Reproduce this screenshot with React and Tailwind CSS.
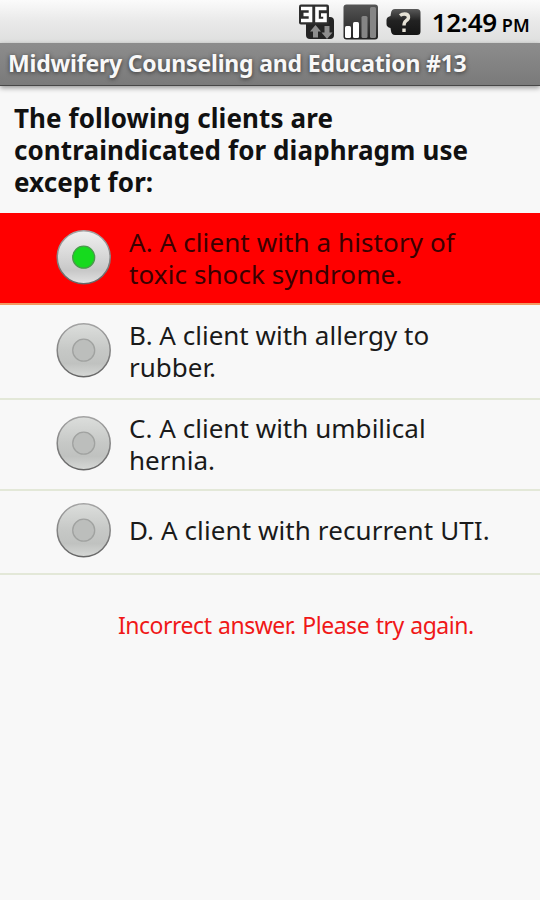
const answers = [
  { text: "A. A client with a history of toxic shock syndrome.", row: "h-[92px] bg-[#ff0000] text-[#3a0000] border-[#f39a62] pb-px", label: "tracking-[0.1px]", radio: "mb-[2px]", selected: true },
  { text: "B. A client with allergy to rubber.", row: "h-[95px] text-[#1a1a1a] border-[#e3e8d8] pb-[2px]", label: "", radio: "mb-[2px]" },
  { text: "C. A client with umbilical hernia.", row: "h-[91px] text-[#1a1a1a] border-[#e3e8d8] pb-[2px]", label: "tracking-[0.03px]", radio: "mb-[2px]" },
  { text: "D. A client with recurrent UTI.", row: "h-[84px] text-[#1a1a1a] border-[#e3e8d8] pb-[4px]", label: "tracking-[0.1px]", radio: "" },
]

const Radio = ({ selected, className }) => {
  return (
    <svg className={`h-[58px] w-[58px] shrink-0 ${className}`} viewBox="0 0 58 58">
      <defs>
        <linearGradient id="radioOn" x1="0" y1="0" x2="0" y2="1">
          <stop offset="0" stopColor="#f0f0f0" />
          <stop offset="0.5" stopColor="#d6d6d6" />
          <stop offset="0.75" stopColor="#c8c8c8" />
          <stop offset="1" stopColor="#e2e2e2" />
        </linearGradient>
        <linearGradient id="radioOff" x1="0" y1="0" x2="0" y2="1">
          <stop offset="0" stopColor="#dcdedc" />
          <stop offset="0.5" stopColor="#c6c8c6" />
          <stop offset="0.75" stopColor="#c0c2c0" />
          <stop offset="1" stopColor="#d6d8d6" />
        </linearGradient>
        <linearGradient id="radioEdge" x1="0" y1="0" x2="0" y2="1">
          <stop offset="0" stopColor="#a4a4a4" />
          <stop offset="1" stopColor="#666" />
        </linearGradient>
      </defs>
      <circle cx="28.7" cy="29.2" r="26.5" fill={selected ? "url(#radioOn)" : "url(#radioOff)"} stroke="url(#radioEdge)" strokeWidth="1.5" />
      <circle cx="28.7" cy="29.2" r="11" fill={selected ? "#16da1e" : "#bcbebc"} stroke={selected ? "#4a9a4c" : "#a0a2a0"} strokeWidth="1.3" />
    </svg>
  )
}

const StatusBar = () => {
  return (
    <div className="flex h-[43px] items-center justify-end bg-linear-to-b from-[#fbfbfb] via-[#e9e9e9] to-[#dedfde] pr-[10px]">
      <svg className="mr-[8px] h-[38px] w-[37px]" viewBox="0 0 37 38">
        <rect x="8" y="14" width="28" height="22" rx="4" fill="#242424" />
        <rect x="1" y="1.500" width="30" height="20" rx="2" fill="#2e2e2e" />
        <path d="M3 5.500H12.500V17.500H3M5.500 11.500H12.500M28.500 5.500H19V17.500H27V12H23" fill="none" stroke="#fff" strokeWidth="3.6" />
        <path d="M17.500 22l5.500 6.500h-3v6h-5v-6h-3zM29 36l5.500-6.500h-3v-6.500h-5v6.500h-3z" fill="#8e8e8e" />
      </svg>
      <svg className="mr-[7px] h-[38px] w-[36px]" viewBox="0 0 36 38">
        <defs>
          <linearGradient id="signalBg" x1="0" y1="0" x2="0" y2="1">
            <stop offset="0" stopColor="#555" />
            <stop offset="1" stopColor="#222" />
          </linearGradient>
        </defs>
        <rect x="0.500" y="1.500" width="34.500" height="35" rx="3" fill="url(#signalBg)" />
        <rect x="2" y="23" width="6" height="12" rx="1.500" fill="#fff" />
        <rect x="10" y="19" width="6" height="16" rx="1.500" fill="#fff" />
        <rect x="18.500" y="13" width="6" height="22" rx="1.500" fill="#858585" />
        <rect x="27" y="4" width="6" height="31" rx="1.500" fill="#858585" />
      </svg>
      <svg className="mr-[10px] h-[38px] w-[36px]" viewBox="0 0 36 38">
        <defs>
          <linearGradient id="batteryBg" x1="0" y1="0" x2="0" y2="1">
            <stop offset="0" stopColor="#5a5a5a" />
            <stop offset="0.45" stopColor="#222" />
            <stop offset="1" stopColor="#151515" />
          </linearGradient>
        </defs>
        <path d="M9 6H31Q34.500 6 34.500 9.500V28.500Q34.500 32 31 32H9Q5.500 32 5 28L4.500 25Q0.500 24 0.500 21V17Q0.500 14 4.500 13L5 10Q5.500 6 9 6Z" fill="url(#batteryBg)" />
        <path d="M14 12.500Q16 11 18.500 11Q22.500 11 22.500 14.200Q22.500 16.300 20 17.800Q18 19.200 18 22.500M18 25.500V29" fill="none" stroke="#e6e2d6" strokeWidth="3.4" />
      </svg>
      <div className="flex items-baseline whitespace-nowrap text-black">
        <span className="text-[26px] font-semibold leading-[42px] tracking-[-0.3px]">12:49</span>
        <span className="ml-[5px] text-[18px] font-semibold tracking-[0.2px]">PM</span>
      </div>
    </div>
  )
}

const App = () => {
  return (
    <div className="h-[900px] w-[540px] overflow-hidden bg-[#f8f8f8] font-['Noto_Sans',sans-serif]">
      <StatusBar />
      <div className="h-[43px] border-b border-t border-b-[#474747] border-t-[#8b8b8b] bg-linear-to-b from-[#8c8c8c] to-[#7a7a7a] pl-[8px] shadow-[0_2px_5px_#00000066]">
        <div className="whitespace-nowrap text-[23px] font-bold leading-[39px] tracking-[-0.19px] text-[#f8f8f8] [text-shadow:0_1px_4px_#333]">
          Midwifery Counseling and Education #13
        </div>
      </div>
      <p className="h-[127px] pl-[14px] pr-[50px] pt-[16px] text-[26px] font-bold leading-[32px] tracking-[0.1px] text-[#111]">
        The following clients are contraindicated for diaphragm use except for:
      </p>
      {answers.map((answer) => (
        <div key={answer.text} className={`flex items-center border-b-2 pl-[55px] ${answer.row}`}>
          <Radio selected={answer.selected} className={answer.radio} />
          <p className={`ml-[16px] w-[370px] text-[26px] leading-[32px] ${answer.label}`}>{answer.text}</p>
        </div>
      ))}
      <div className="whitespace-nowrap pl-[118px] pt-[34px] text-[23px] leading-[32px] tracking-[-0.48px] text-[#f01818] [word-spacing:1px]">
        Incorrect answer. Please try again.
      </div>
    </div>
  )
}
export default App
